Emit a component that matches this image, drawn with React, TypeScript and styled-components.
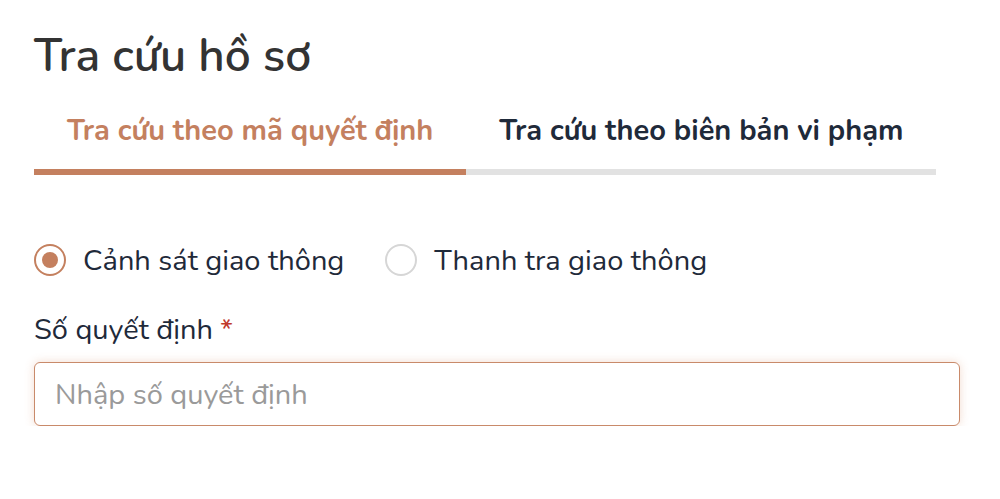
import { useState } from "react";
import styled, { createGlobalStyle } from "styled-components";

const GlobalStyle = createGlobalStyle`
  html, body {
    margin: 0;
    padding: 0;
    background: #ffffff;
    font-family: "Nunito", Lato, "Noto Sans", sans-serif;
  }
`;

const Page = styled.div`
  padding: 26px 40px 0 34px;
`;

const Title = styled.h1`
  margin: 0;
  font-size: 46px;
  font-weight: 600;
  color: #333333;
  line-height: 60px;
`;

const Tabs = styled.div`
  display: flex;
  margin-top: 25px;
`;

const Tab = styled.button<{ $active?: boolean }>`
  border: none;
  background: none;
  font-family: inherit;
  font-size: 29px;
  font-weight: 700;
  padding: 0 33px 18px;
  color: ${(p) => (p.$active ? "#c4805f" : "#1f2a3a")};
  border-bottom: 6px solid ${(p) => (p.$active ? "#c4805f" : "#e2e2e2")};
  cursor: pointer;
  line-height: 40px;
`;

const RadioRow = styled.div`
  display: flex;
  align-items: center;
  gap: 41px;
  margin-top: 65px;
  height: 40px;
`;

const RadioLabel = styled.label`
  display: flex;
  align-items: center;
  gap: 17px;
  font-size: 29px;
  color: #1f2a3a;
  cursor: pointer;
`;

const Circle = styled.span<{ $checked?: boolean }>`
  width: 32px;
  height: 32px;
  box-sizing: border-box;
  border-radius: 50%;
  border: 2px solid ${(p) => (p.$checked ? "#c4805f" : "#d6d6d6")};
  display: flex;
  align-items: center;
  justify-content: center;
  &::after {
    content: "";
    width: 16px;
    height: 16px;
    border-radius: 50%;
    background: ${(p) => (p.$checked ? "#c4805f" : "transparent")};
  }
`;

const FieldLabel = styled.div`
  margin-top: 32px;
  font-size: 29px;
  color: #1f2a3a;
  line-height: 36px;
`;

const Star = styled.span`
  color: #c0392b;
  margin-left: 7px;
`;

const Input = styled.input`
  margin-top: 14px;
  width: 100%;
  box-sizing: border-box;
  height: 64px;
  border: 1.5px solid #c98a6a;
  border-radius: 6px;
  padding: 0 20px;
  font-family: inherit;
  font-size: 29px;
  color: #1f2a3a;
  caret-color: #1f2a3a;
  outline: none;
  box-shadow: 0 0 10px rgba(214, 140, 100, 0.3);
  &::placeholder {
    color: #9a9a9a;
  }
`;

export default function App() {
  const [tab, setTab] = useState(0);
  const [agency, setAgency] = useState(0);
  const [value, setValue] = useState("");

  return (
    <Page>
      <GlobalStyle />
      <Title>Tra cứu hồ sơ</Title>
      <Tabs>
        <Tab $active={tab === 0} onClick={() => setTab(0)}>
          Tra cứu theo mã quyết định
        </Tab>
        <Tab $active={tab === 1} onClick={() => setTab(1)}>
          Tra cứu theo biên bản vi phạm
        </Tab>
      </Tabs>
      <RadioRow>
        <RadioLabel onClick={() => setAgency(0)}>
          <Circle $checked={agency === 0} />
          Cảnh sát giao thông
        </RadioLabel>
        <RadioLabel onClick={() => setAgency(1)}>
          <Circle $checked={agency === 1} />
          Thanh tra giao thông
        </RadioLabel>
      </RadioRow>
      <FieldLabel>
        Số quyết định<Star>*</Star>
      </FieldLabel>
      <Input
        autoFocus
        value={value}
        placeholder="Nhập số quyết định"
        onChange={(e) => setValue(e.currentTarget.value)}
      />
    </Page>
  );
}
